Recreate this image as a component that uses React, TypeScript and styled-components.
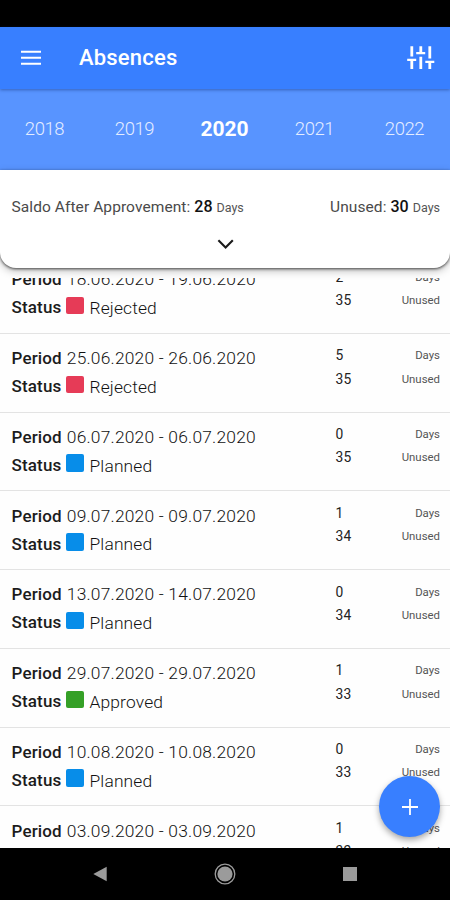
import React from "react";
import styled, { createGlobalStyle } from "styled-components";

const GlobalStyle = createGlobalStyle`
  *, *::before, *::after { box-sizing: border-box; }
  body { margin: 0; background: #fff; font-family: Roboto, sans-serif; }
  button { border: 0; padding: 0; background: none; font: inherit; color: inherit; }
`;

const Screen = styled.div`
  position: relative;
  display: flex;
  flex-direction: column;
  width: 450px;
  height: 900px;
  overflow: hidden;
  background: #fefefe;
`;

const StatusBar = styled.div`
  flex: none;
  height: 26.5px;
  background: #000;
`;

const AppBar = styled.header`
  flex: none;
  position: relative;
  z-index: 2;
  display: flex;
  align-items: center;
  height: 62.5px;
  padding: 0 15px 0 19px;
  background: #387fff;
  color: #fff;
  box-shadow: 0 1px 3px rgba(20, 50, 120, 0.5);
`;

const IconButton = styled.button`
  display: flex;
`;

const Title = styled.h1`
  flex: 1;
  margin: 0 0 0 36px;
  font-size: 22px;
  line-height: 28px;
  font-weight: 500;
  letter-spacing: 0.2px;
`;

const YearTabs = styled.nav`
  flex: none;
  display: grid;
  grid-template-columns: repeat(5, 90px);
  align-items: center;
  height: 80.5px;
  background: #5894ff;
`;

const YearTab = styled.button<{ $active?: boolean }>`
  padding-right: 1px;
  font-size: ${(p) => (p.$active ? "21px" : "18.5px")};
  line-height: 24px;
  font-weight: ${(p) => (p.$active ? 700 : 300)};
  letter-spacing: ${(p) => (p.$active ? "-0.1px" : "-0.4px")};
  color: ${(p) => (p.$active ? "#fff" : "#e4edff")};
`;

const Summary = styled.section`
  flex: none;
  position: relative;
  z-index: 1;
  display: flex;
  flex-direction: column;
  align-items: center;
  height: 98px;
  padding-top: 25px;
  background: #fff;
  border-radius: 0 0 16px 16px;
  box-shadow: 0 1px 3px rgba(0, 0, 0, 0.65), 0 3px 8px rgba(0, 0, 0, 0.25);
`;

const Totals = styled.div`
  display: flex;
  justify-content: space-between;
  width: 100%;
  padding: 0 10px 0 11.5px;
  margin-bottom: 13px;
`;

const Total = styled.div`
  font-size: 15.5px;
  line-height: 24px;
  letter-spacing: 0.08px;
  color: #4a4a4a;
  white-space: nowrap;
`;

const TotalValue = styled.b`
  font-size: 16px;
  font-weight: 500;
  color: #111;
`;

const Unit = styled.small`
  font-size: 11.4px;
  letter-spacing: 0;
  color: #555;
`;

const TotalUnit = styled(Unit)`
  font-size: 12.5px;
`;

const List = styled.main`
  flex: 1;
  min-height: 0;
  margin-top: 10.5px;
  overflow: hidden;
`;

const Entries = styled.div`
  margin-top: -23px;
`;

const Entry = styled.article`
  display: flex;
  justify-content: space-between;
  height: 78.75px;
  padding: 0 10px 0 11.5px;
  border-bottom: 1.5px solid #e3e3e3;
`;

const Details = styled.div`
  padding-top: 10px;
`;

const DetailLine = styled.div`
  display: flex;
  align-items: center;
  height: 28.5px;
  font-size: 17.4px;
  white-space: nowrap;

  & + & {
    height: 27.5px;
  }
`;

const Label = styled.span`
  width: 55.3px;
  font-weight: 500;
  font-size: 17px;
  letter-spacing: 0.15px;
  color: #1c1c1c;
`;

const Period = styled.span`
  font-weight: 300;
  letter-spacing: 0.2px;
  color: #111;
`;

const Swatch = styled.span<{ $color: string }>`
  width: 17.5px;
  height: 17.5px;
  margin: -3.5px 6px 0 -0.8px;
  border-radius: 2px;
  background: ${(p) => p.$color};
`;

const StatusName = styled.span`
  padding-top: 1.5px;
  font-weight: 300;
  letter-spacing: 0.15px;
  color: #111;
`;

const Counts = styled.div`
  width: 104.5px;
  padding-top: 10px;
`;

const CountLine = styled.div`
  display: flex;
  justify-content: space-between;
  align-items: center;
  height: 23.2px;
  font-size: 13.8px;
  color: #222;
`;

const Count = styled.span`
  letter-spacing: 0.3px;
`;

const BottomNav = styled.footer`
  flex: none;
  display: grid;
  grid-template-columns: repeat(3, 125px);
  justify-content: center;
  justify-items: center;
  align-items: center;
  height: 52px;
  background: #000;
`;

const AddButton = styled.button`
  position: absolute;
  right: 10px;
  bottom: 63px;
  z-index: 3;
  display: flex;
  align-items: center;
  justify-content: center;
  width: 61px;
  height: 61px;
  border-radius: 50%;
  background: #387fff;
  box-shadow: 0 3px 6px rgba(0, 0, 0, 0.35);
`;

type Status = "Rejected" | "Planned" | "Approved";

const statusColors: Record<Status, string> = {
  Rejected: "#e63b57",
  Planned: "#078de9",
  Approved: "#35a027",
};

const absences: { period: string; status: Status; days: number; unused: number }[] = [
  { period: "18.06.2020 - 19.06.2020", status: "Rejected", days: 2, unused: 35 },
  { period: "25.06.2020 - 26.06.2020", status: "Rejected", days: 5, unused: 35 },
  { period: "06.07.2020 - 06.07.2020", status: "Planned", days: 0, unused: 35 },
  { period: "09.07.2020 - 09.07.2020", status: "Planned", days: 1, unused: 34 },
  { period: "13.07.2020 - 14.07.2020", status: "Planned", days: 0, unused: 34 },
  { period: "29.07.2020 - 29.07.2020", status: "Approved", days: 1, unused: 33 },
  { period: "10.08.2020 - 10.08.2020", status: "Planned", days: 0, unused: 33 },
  { period: "03.09.2020 - 03.09.2020", status: "Planned", days: 1, unused: 32 },
];

const years = [2018, 2019, 2020, 2021, 2022];

export default function App() {
  return (
    <>
      <GlobalStyle />
      <Screen>
        <StatusBar />
        <AppBar>
          <IconButton aria-label="Menu">
            <svg width="24" height="20" viewBox="0 0 24 20" stroke="#fff" strokeWidth="2">
              <path d="M2 3.8h20M2 9.8h20M2 15.8h20" />
            </svg>
          </IconButton>
          <Title>Absences</Title>
          <IconButton aria-label="Filters">
            <svg width="28" height="24" viewBox="0 0 28 24" stroke="#fff" strokeWidth="2.8" fill="none">
              <path d="M4.8 0.3v10.2M4.8 13.3v9.6M13.8 0.3v6.5M13.8 10.8v12.1M22.8 0.3v12.2M22.8 15.3v7.6" />
              <path d="M0.2 13.8h9M9.2 7.2h9M18.3 15.8h9" strokeWidth="2.2" />
            </svg>
          </IconButton>
        </AppBar>
        <YearTabs>
          {years.map((year) => (
            <YearTab key={year} $active={year === 2020}>
              {year}
            </YearTab>
          ))}
        </YearTabs>
        <Summary>
          <Totals>
            <Total>
              Saldo After Approvement: <TotalValue>28</TotalValue> <TotalUnit>Days</TotalUnit>
            </Total>
            <Total>
              Unused: <TotalValue>30</TotalValue> <TotalUnit>Days</TotalUnit>
            </Total>
          </Totals>
          <IconButton aria-label="Expand">
            <svg width="18" height="22" viewBox="0 0 18 22" fill="none" stroke="#1a1a1a" strokeWidth="2.1">
              <path d="M2.4 7.2 9.6 14.4l7.2-7.2" />
            </svg>
          </IconButton>
        </Summary>
        <List>
          <Entries>
            {absences.map((a) => (
              <Entry key={a.period}>
                <Details>
                  <DetailLine>
                    <Label>Period</Label>
                    <Period>{a.period}</Period>
                  </DetailLine>
                  <DetailLine>
                    <Label>Status</Label>
                    <Swatch $color={statusColors[a.status]} />
                    <StatusName>{a.status}</StatusName>
                  </DetailLine>
                </Details>
                <Counts>
                  <CountLine>
                    <Count>{a.days}</Count>
                    <Unit>Days</Unit>
                  </CountLine>
                  <CountLine>
                    <Count>{a.unused}</Count>
                    <Unit>Unused</Unit>
                  </CountLine>
                </Counts>
              </Entry>
            ))}
          </Entries>
        </List>
        <AddButton aria-label="Add absence">
          <svg width="18" height="18" viewBox="0 0 18 18" stroke="#fff" strokeWidth="1.8">
            <path d="M9 1v16M1 9h16" />
          </svg>
        </AddButton>
        <BottomNav>
          <svg width="14" height="16" viewBox="0 0 14 16" fill="#9b9b9b">
            <path d="M0.3 8 13.7 0.8v14.4z" />
          </svg>
          <svg width="22" height="22" viewBox="0 0 22 22">
            <circle cx="11" cy="11" r="9.8" fill="none" stroke="#9b9b9b" strokeWidth="1.3" />
            <circle cx="11" cy="11" r="7.6" fill="#9b9b9b" />
          </svg>
          <svg width="14" height="14" viewBox="0 0 14 14" fill="#9b9b9b">
            <path d="M0 0h14v14H0z" />
          </svg>
        </BottomNav>
      </Screen>
    </>
  );
}
